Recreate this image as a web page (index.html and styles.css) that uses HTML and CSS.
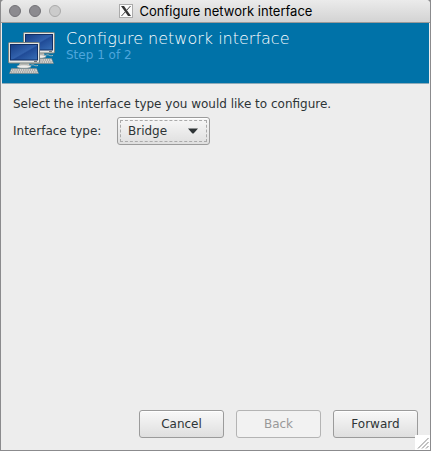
FILE: index.html
```html
<!DOCTYPE html>
<html lang="en">
<head>
<meta charset="utf-8">
<title>Configure network interface</title>
<link rel="stylesheet" href="styles.css">
</head>
<body>
<div class="window">
  <header class="titlebar">
    <div class="lights"><i></i><i></i><i class="off"></i></div>
    <svg class="xicon" width="14" height="14" viewBox="0 0 14 14"><rect x=".5" y=".5" width="13" height="13" fill="#fafafa" stroke="#aaa"/><path d="M2 2h3l7 10H9z" fill="#333"/><path d="M11.5 2 2.5 12" stroke="#444" fill="none"/></svg>
    <span class="title">Configure network interface</span>
  </header>
  <section class="banner">
    <svg class="computers" width="48" height="44" viewBox="0 0 48 44">
      <defs>
        <linearGradient id="screen" x1="0" y1="0" x2="1" y2="1"><stop stop-color="#163d83"/><stop offset=".5" stop-color="#3262ad"/><stop offset=".55" stop-color="#204b97"/><stop offset="1" stop-color="#3970b8"/></linearGradient>
        <g id="computer">
          <path d="M12 21h9l1 4H10z" fill="#c9c9c5"/>
          <ellipse cx="16" cy="24.5" rx="7" ry="1.7" fill="#eeeeec" stroke="#888a85" stroke-width=".5"/>
          <rect x=".5" y=".5" width="31" height="20.5" rx="1" fill="#e6e6e2" stroke="#77817f"/>
          <rect x="2.5" y="2.5" width="27" height="15.5" fill="url(#screen)" stroke="#102e65"/>
          <path d="M26 19.5h3" stroke="#777"/>
          <path d="M3.5 26.5h25l2 5h-29z" fill="#e2e2df" stroke="#777b79" stroke-width=".6"/>
          <path d="M4 28h24M3 30h26" stroke="#777" stroke-dasharray="1.5 .7"/>
          <path d="M22 23.5c5-2 3 1 8 0" fill="none" stroke="#a8b9bd"/>
        </g>
      </defs>
      <use href="#computer" x="15" y="0"/>
      <use href="#computer" x="0" y="10"/>
    </svg>
    <div class="heading"><h1>Configure network interface</h1><p>Step 1 of 2</p></div>
  </section>
  <main class="content">
    <p class="prompt">Select the interface type you would like to configure.</p>
    <div class="field">
      <label>Interface type:</label>
      <button class="button select"><span class="focus"><span>Bridge</span><svg width="10" height="6" viewBox="0 0 10 6"><path d="M0 .5h10L5.8 5.2q-.8.8-1.6 0z" fill="#2e3436"/></svg></span></button>
    </div>
  </main>
  <footer class="actions">
    <button class="button">Cancel</button>
    <button class="button" disabled>Back</button>
    <button class="button">Forward</button>
  </footer>
  <svg class="grip" width="15" height="15" viewBox="0 0 15 15"><path fill="#fff" d="M0 0h15v15H0z"/><path d="M3 13.5 13.5 3M7 13.5 13.5 7M11 13.5l2.5-2.5" stroke="#888" fill="none"/></svg>
</div>
</body>
</html>
```
FILE: styles.css
```css
* { box-sizing: border-box; }
body { margin: 0; background: #8b8b8d; overflow: hidden; }
h1, p { margin: 0; font-weight: normal; }
.window {
  position: relative;
  display: flex;
  flex-direction: column;
  width: 429px;
  height: 450px;
  margin-left: 1px;
  background: #ededed;
  border-radius: 4px 4px 0 0;
  color: #2e3436;
  font: 12px/16px "DejaVu Sans", sans-serif;
  box-shadow: 0 2px #242424;
}
.titlebar {
  position: relative;
  display: flex;
  align-items: center;
  justify-content: center;
  gap: 7px;
  height: 23px;
  padding-bottom: 1px;
  background: linear-gradient(#ebebeb, #d3d3d3);
  border-bottom: 1px solid #999;
  border-radius: 4px 4px 0 0;
}
.lights { position: absolute; left: 8px; top: 5px; display: flex; gap: 8px; }
.lights i { width: 12px; height: 12px; border-radius: 50%; background: #8c8b90; border: 1px solid #737277; }
.lights .off { background: #cbcbcb; border-color: #aaa; }
.title { color: #000; font: 13px/16px Inter, sans-serif; white-space: nowrap; }
.banner {
  display: flex;
  height: 61px;
  margin: 0 1px;
  padding: 9px 0 0 6px;
  background: #0072a8;
  border-bottom: 1px solid #8eabb9;
  color: #fff;
}
.heading { margin: -3px 0 0 10px; white-space: nowrap; }
.heading h1 { font: 200 16px/19px "DejaVu Sans", sans-serif; }
.heading p { color: #4ea6dc; font-size: 12px; line-height: 15px; }
.content { flex: 1; padding: 12px; }
.prompt { white-space: nowrap; }
.field { display: flex; align-items: center; gap: 12px; margin-top: 5px; }
.field label { white-space: nowrap; width: 92px; }
.button {
  height: 28px;
  padding: 0;
  border: 1px solid #9b9b9b;
  border-radius: 3px;
  background: linear-gradient(#f8f8f8, #dfdfdf);
  box-shadow: inset 0 1px #fff;
  color: #2e3436;
  font: 12px/16px "DejaVu Sans", sans-serif;
}
.select { width: 93px; padding: 2px; }
.focus { display: flex; align-items: center; justify-content: space-between; height: 22px; padding: 0 8px 0 7px; border: 1px dashed #aaa; }
.actions { display: flex; gap: 12px; justify-content: flex-end; padding: 0 12px 12px 0; }
.actions .button { width: 85px; }
.button:disabled { background: #f2f2f2; border-color: #b4b4b4; color: #999; box-shadow: none; }
.grip { position: absolute; right: 0; bottom: 0; }
```
